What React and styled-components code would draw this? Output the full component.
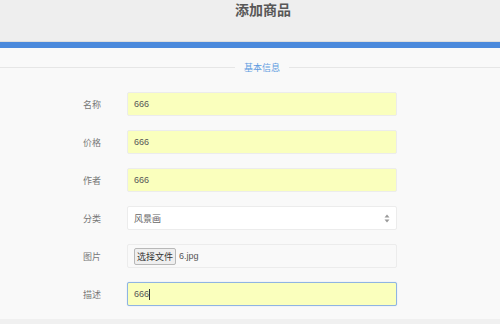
import React from 'react';
import styled, { createGlobalStyle } from 'styled-components';

const GlobalStyle = createGlobalStyle`
  html, body {
    margin: 0;
    padding: 0;
    background: #f0f0f0;
    font-family: "Liberation Sans", "Noto Sans CJK SC", sans-serif;
  }
`;

const Page = styled.div`
  width: 500px;
  height: 324px;
  overflow: hidden;
  background: #f0f0f0;
`;

const Header = styled.header`
  height: 42px;
  background: #eeeeee;
  border-bottom: 1px solid #dedede;
  display: flex;
  justify-content: center;
  padding-left: 26px;
  box-sizing: border-box;
`;

const Title = styled.h1`
  margin: 2px 0 0;
  font-size: 14px;
  line-height: 16px;
  font-weight: bold;
  color: #585858;
`;

const BlueBar = styled.div`
  height: 6px;
  background: #4a89dc;
`;

const Content = styled.section`
  background: #f9f9f9;
  padding: 13px 0 13px;
`;

const Legend = styled.div`
  display: flex;
  align-items: center;
  gap: 9px;
  font-size: 9px;
  color: #5d9be0;
  margin-bottom: 18px;

  &::before, &::after {
    content: '';
    height: 1px;
    background: #e6e6e6;
  }
  &::before { flex: 0 0 235px; }
  &::after { flex: 1; }
`;

const Rows = styled.div`
  display: flex;
  flex-direction: column;
  gap: 14px;
`;

const Row = styled.div`
  display: flex;
  align-items: center;
`;

const Label = styled.div`
  width: 44px;
  padding-left: 83px;
  font-size: 9px;
  color: #777;
`;

const Field = styled.div`
  width: 270px;
  height: 24px;
  box-sizing: border-box;
  display: flex;
  align-items: center;
  padding: 0 6px;
  font-size: 9px;
  color: #555;
  border-radius: 2px;
  background: ${p => (p.$filled ? '#faffbd' : '#fff')};
  border: 1px solid ${p => (p.$focus ? '#8fb4e3' : '#ececec')};
  box-shadow: ${p => (p.$focus ? '0 0 1px #a8c8ee' : 'none')};
`;

const PlainField = styled(Field)`
  background: #f9f9f9;
`;

const SelectText = styled.span`
  flex: 1;
  color: #666;
`;

const Caret = styled.span`
  display: inline-block;
  width: 1px;
  height: 11px;
  background: #333;
`;

const FileButton = styled.span`
  display: inline-flex;
  align-items: center;
  height: 15px;
  padding: 0 2px;
  margin-right: 3px;
  background: #efefef;
  border: 1px solid #b8b8b8;
  border-radius: 2px;
  font-size: 9px;
  color: #333;
`;

const FileName = styled.span`
  color: #555;
  font-size: 9px;
`;

const Arrows = () => (
  <svg width="6" height="9" viewBox="0 0 6 9">
    <path d="M3 0.5 L5.5 3.5 L0.5 3.5 Z" fill="#999" />
    <path d="M3 8.5 L5.5 5.5 L0.5 5.5 Z" fill="#999" />
  </svg>
);

const App = () => (
  <Page>
    <GlobalStyle />
    <Header>
      <Title>添加商品</Title>
    </Header>
    <BlueBar />
    <Content>
      <Legend>基本信息</Legend>
      <Rows>
        <Row>
          <Label>名称</Label>
          <Field $filled>666</Field>
        </Row>
        <Row>
          <Label>价格</Label>
          <Field $filled>666</Field>
        </Row>
        <Row>
          <Label>作者</Label>
          <Field $filled>666</Field>
        </Row>
        <Row>
          <Label>分类</Label>
          <Field>
            <SelectText>风景画</SelectText>
            <Arrows />
          </Field>
        </Row>
        <Row>
          <Label>图片</Label>
          <PlainField>
            <FileButton>选择文件</FileButton>
            <FileName>6.jpg</FileName>
          </PlainField>
        </Row>
        <Row>
          <Label>描述</Label>
          <Field $filled $focus>
            666<Caret />
          </Field>
        </Row>
      </Rows>
    </Content>
  </Page>
);

export default App;
